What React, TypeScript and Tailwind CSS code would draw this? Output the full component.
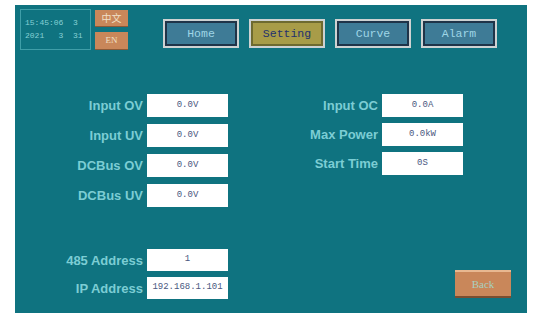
import React from "react";

const leftRows = [
  { label: "Input OV", value: "0.0V" },
  { label: "Input UV", value: "0.0V" },
  { label: "DCBus OV", value: "0.0V" },
  { label: "DCBus UV", value: "0.0V" },
];

const rightRows = [
  { label: "Input OC", value: "0.0A" },
  { label: "Max Power", value: "0.0kW" },
  { label: "Start Time", value: "0S" },
];

const navs = ["Home", "Setting", "Curve", "Alarm"];

function Field({ label, value, labelW, h = "h-[23px]" }: { label: string; value: string; labelW: string; h?: string }) {
  return (
    <div className="flex items-center gap-[4px]">
      <div className={`${labelW} text-right text-[13px] font-bold text-[#7ccdd4] font-['Liberation_Sans',sans-serif] leading-none`}>
        {label}
      </div>
      <div className={`w-[81px] ${h} bg-white flex items-center justify-center text-[9px] text-[#4a5880] font-['Liberation_Mono',monospace]`}>
        {value}
      </div>
    </div>
  );
}

export default function App() {
  return (
    <div className="w-[544px] h-[328px] bg-white pt-[5px] pl-[15px]">
      <div className="w-[512px] h-[308px] bg-[#0f7380] flex flex-col">
        {/* Header */}
        <div className="flex items-start pt-[4px] pl-[5px]">
          <div className="w-[71px] h-[41px] border border-[#3f9ea8] flex flex-col justify-center gap-[5px] pl-[4px] text-[8px] text-[#86d0d4] font-['Liberation_Mono',monospace] leading-none">
            <span>15:45:06&nbsp;&nbsp;3</span>
            <span>2021&nbsp;&nbsp;&nbsp;3&nbsp;&nbsp;31</span>
          </div>
          <div className="ml-[4px] mt-[1px] flex flex-col gap-[5px]">
            <div className="w-[33px] h-[17px] bg-[#c9875a] border-b border-[#8a5a38] flex items-center justify-center text-[10px] text-[#f0e0c8] font-['Noto_Sans_CJK_SC',sans-serif] leading-none">
              中文
            </div>
            <div className="w-[33px] h-[18px] bg-[#c9875a] border-b border-[#8a5a38] flex items-center justify-center text-[9px] text-[#f0e0c8] font-['Liberation_Serif',serif] leading-none">
              EN
            </div>
          </div>
          <div className="ml-[35px] mt-[10px] flex gap-[10px]">
            {navs.map((n) => {
              const active = n === "Setting";
              return (
                <div key={n} className="w-[76px] h-[29px] bg-[#cdd2d2] p-[2px]">
                  <div
                    className={`w-full h-full border-2 ${
                      active ? "border-[#6e6a30] bg-[#a89c48] text-[#23316e]" : "border-[#1f3448] bg-[#3e7b96] text-[#9fd6e6]"
                    } flex items-center justify-center text-[11.5px] font-['Liberation_Mono',monospace] leading-none`}
                  >
                    {n}
                  </div>
                </div>
              );
            })}
          </div>
        </div>

        {/* Form */}
        <div className="mt-[44px] flex">
          <div className="flex flex-col gap-[7px]">
            {leftRows.map((r) => (
              <Field key={r.label} label={r.label} value={r.value} labelW="w-[128px]" />
            ))}
          </div>
          <div className="ml-[51px] flex flex-col gap-[6px]">
            {rightRows.map((r) => (
              <Field key={r.label} label={r.label} value={r.value} labelW="w-[99px]" />
            ))}
          </div>
        </div>

        {/* Bottom */}
        <div className="mt-auto mb-[14px] flex items-end">
          <div className="flex flex-col gap-[6px]">
            <Field label="485 Address" value="1" labelW="w-[128px]" h="h-[22px]" />
            <Field label="IP Address" value="192.168.1.101" labelW="w-[128px]" h="h-[22px]" />
          </div>
          <div className="ml-[227px] mb-[1px] w-[56px] h-[28px] bg-[#c9875a] border-t-2 border-[#e8b890] border-b-2 border-b-[#7a4e30] flex items-center justify-center text-[11px] text-[#a8d0c0] font-['Liberation_Serif',serif] leading-none">
            Back
          </div>
        </div>
      </div>
    </div>
  );
}
